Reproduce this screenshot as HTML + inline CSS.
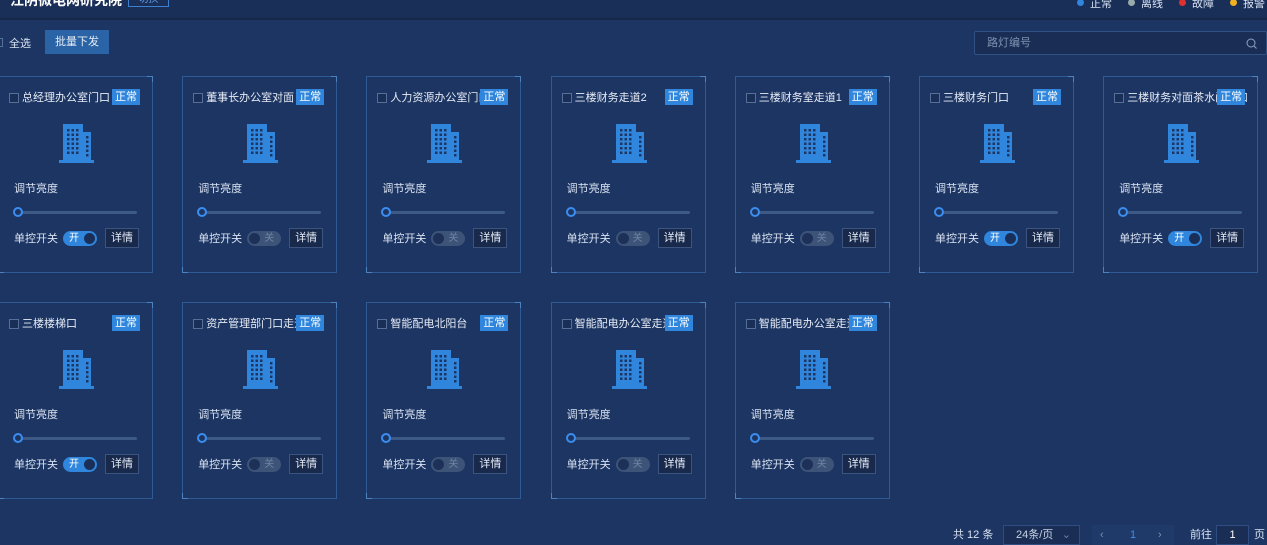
<!DOCTYPE html>
<html><head><meta charset="utf-8"><style>
*{margin:0;padding:0;box-sizing:border-box}
body{width:1267px;height:541px;overflow:hidden;background:#1d3562;font-family:"Liberation Sans","Noto Sans CJK SC",sans-serif;color:#d8e2f2;position:relative;font-size:11px}
.hdr{position:absolute;left:0;top:0;width:1267px;height:20px;background:#1a2f58;border-bottom:2px solid #162849}
.title{position:absolute;left:10px;top:-10px;font-size:14px;font-weight:bold;color:#fff}
.qh{position:absolute;left:128px;top:-7px;width:41px;height:14px;border:1px solid #3f7fd0;color:#5fa0ea;font-size:10px;text-align:center;line-height:12px}
.leg{position:absolute;top:-5px;font-size:11px;color:#d8e2f2}
.leg i{display:inline-block;width:7px;height:7px;border-radius:50%;margin-right:6px;vertical-align:1px}
.card{position:absolute;width:155px;height:197px;border:1px solid #305a94;background:#1d3562}
.card:before,.card:after{content:"";position:absolute;width:5px;height:5px;border-color:#4c82c2;border-style:solid}
.card:before{right:-1px;top:-1px;border-width:1px 1px 0 0}
.card:after{left:-1px;bottom:-1px;border-width:0 0 1px 1px}
.cb{position:absolute;left:10px;top:16px;width:10px;height:10px;border:1px solid #556f96;background:#1a2f58}
.nm{position:absolute;left:23px;top:12px;font-size:11px;color:#e6ecf6;white-space:nowrap}
.tag{position:absolute;left:113px;top:12px;width:28px;height:16px;background:#2f86dc;color:#fff;font-size:11px;text-align:center;line-height:16px}
.ic{position:absolute;left:60px;top:46px}
.lb{position:absolute;left:15px;top:103px;font-size:11px}
.sl{position:absolute;left:20px;top:134px;width:118px;height:3px;background:#3d5a86;border-radius:2px}
.dot{position:absolute;left:14px;top:130px;width:10px;height:10px;border-radius:50%;border:2px solid #3a8ef0;background:#1d3562}
.sw{position:absolute;left:15px;top:153px;font-size:11px}
.tg{position:absolute;left:64px;top:154px;width:34px;height:15px;border-radius:8px;font-size:10px;line-height:15px}
.on{background:#2f86dc;color:#fff}
.on span{position:absolute;left:6px}
.on b{position:absolute;right:2px;top:2px;width:11px;height:11px;border-radius:50%;background:#1a2f58}
.off{background:#3d5478;color:#6f84a4}
.off span{position:absolute;right:7px}
.off b{position:absolute;left:2px;top:2px;width:11px;height:11px;border-radius:50%;background:#1c3058}
.dt{position:absolute;left:106px;top:151px;width:34px;height:20px;border:1px solid #3b5580;background:#18294b;color:#e6ecf6;text-align:center;line-height:18px;font-size:11px}
.search{position:absolute;left:974px;top:31px;width:293px;height:24px;border:1px solid #2f5185;background:#1a2d55;border-radius:2px;color:#7d91b0;font-size:11px;line-height:22px;padding-left:12px}
.pg{position:absolute;top:526px;font-size:11px}
.box{position:absolute;top:525px;height:20px;border:1px solid #2f4d80;background:#1a2d55}
</style></head><body>
<div class="hdr"></div>
<div class="title">江阴微电网研究院</div>
<div class="qh">切换</div>
<div class="leg" style="left:1077px"><i style="background:#2f86dc"></i>正常</div>
<div class="leg" style="left:1128px"><i style="background:#9aa"></i>离线</div>
<div class="leg" style="left:1179px"><i style="background:#e03030"></i>故障</div>
<div class="leg" style="left:1230px"><i style="background:#f0b020"></i>报警</div>
<div style="position:absolute;left:-6px;top:38px;width:9px;height:9px;border:1px solid #556f96"></div>
<div style="position:absolute;left:9px;top:35px;font-size:11px">全选</div>
<div style="position:absolute;left:45px;top:30px;width:64px;height:24px;background:#2a63a6;color:#e6ecf6;text-align:center;line-height:24px;font-size:11px">批量下发</div>
<div class="search">路灯编号<svg style="position:absolute;right:9px;top:6px" width="11" height="11" viewBox="0 0 11 11"><circle cx="5" cy="5" r="4" fill="none" stroke="#8fa3c0" stroke-width="1"/><path d="M8 8l2.5 2.5" stroke="#8fa3c0"/></svg></div>

<div id="cards"></div>

<div class="pg" style="left:953px">共 12 条</div>
<div class="box" style="left:1003px;width:77px;color:#c8d3e6;padding-left:12px;line-height:18px">24条/页<span style="position:absolute;right:8px;color:#6f84a4">⌄</span></div>
<div class="box" style="left:1092px;width:82px;border:none;background:#1f3a68;color:#7d91b0;line-height:20px"><span style="position:absolute;left:8px">‹</span><span style="position:absolute;left:38px;color:#3a8ef0">1</span><span style="position:absolute;left:66px">›</span></div>
<div class="pg" style="left:1190px">前往</div>
<div class="box" style="left:1216px;width:33px;text-align:center;line-height:18px;color:#fff">1</div>
<div class="pg" style="left:1254px">页</div>

<script>
var d=[["总经理办公室门口",1],["董事长办公室对面",0],["人力资源办公室门口",0],["三楼财务走道2",0],["三楼财务室走道1",0],["三楼财务门口",1],["三楼财务对面茶水间门口",1],["三楼楼梯口",1],["资产管理部门口走道",0],["智能配电北阳台",0],["智能配电办公室走道2",0],["智能配电办公室走道",0]];
var ic='<svg width="35" height="41" viewBox="0 0 35 41"><rect x="4" y="1" width="20" height="36" fill="#2f86dc"/><rect x="24" y="9" width="8" height="28" fill="#2f86dc"/><rect x="0" y="37" width="35" height="3" fill="#2f86dc"/>';
for(var r=0;r<6;r++)for(var c=0;c<3;c++)ic+='<rect x="'+(8+c*4.5)+'" y="'+(6+r*4.5)+'" width="2.5" height="2.5" fill="#1d3562"/>';
for(var r=0;r<5;r++)ic+='<rect x="27" y="'+(13+r*4.5)+'" width="2.5" height="2.5" fill="#1d3562"/>';
ic+='</svg>';
var h='';
d.forEach(function(x,i){var col=i%7,row=Math.floor(i/7);var L=-2+col*184.2,T=76+row*226;
h+='<div class="card" style="left:'+L+'px;top:'+T+'px"><div class="cb"></div><div class="nm">'+x[0]+'</div><div class="tag">正常</div><div class="ic">'+ic+'</div><div class="lb">调节亮度</div><div class="sl"></div><div class="dot"></div><div class="sw">单控开关</div>'+(x[1]?'<div class="tg on"><span>开</span><b></b></div>':'<div class="tg off"><b></b><span>关</span></div>')+'<div class="dt">详情</div></div>';});
document.getElementById('cards').innerHTML=h;
</script>
</body></html>
